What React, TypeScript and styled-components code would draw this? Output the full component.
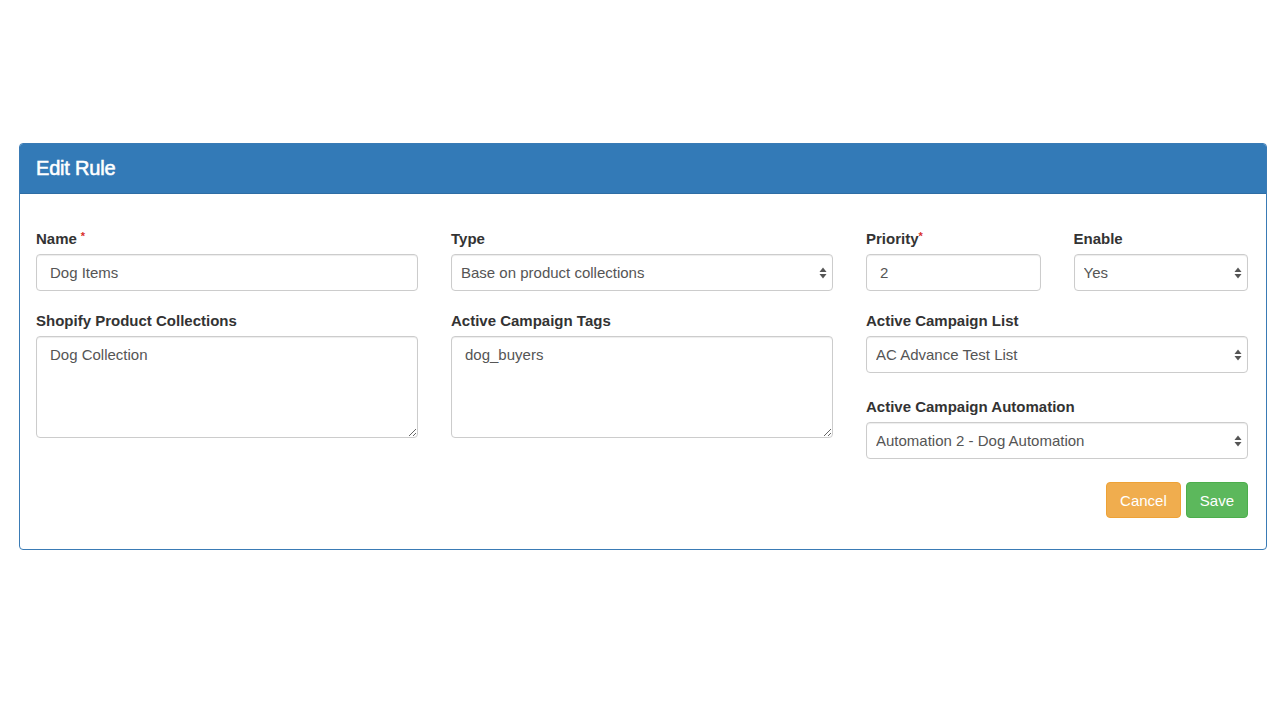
import React, { useState } from 'react';
import styled, { createGlobalStyle } from 'styled-components';

const GlobalStyle = createGlobalStyle`
  html, body {
    margin: 0;
    padding: 0;
    background: #fff;
  }
  body {
    font-family: "Liberation Sans", Arial, Helvetica, sans-serif;
    color: #333;
  }
  * { box-sizing: border-box; }
`;

const Page = styled.div`
  width: 1280px;
  height: 720px;
  padding-top: 143px;
  padding-left: 19px;
`;

const Panel = styled.div`
  width: 1248px;
  border: 1px solid #3a7bb5;
  border-radius: 4px;
  background: #fff;
  overflow: hidden;
`;

const PanelHeading = styled.div`
  height: 50px;
  background: #337ab7;
  display: flex;
  align-items: center;
  padding: 0 16px;
  border-bottom: 1px solid #2e6da4;
`;

const PanelTitle = styled.h3`
  margin: 0;
  color: #fff;
  font-size: 20px;
  font-weight: 400;
  -webkit-text-stroke: 0.55px #fff;
  letter-spacing: -0.2px;
`;

const PanelBody = styled.div`
  padding: 35px 18px 31px 16px;
`;

const Grid = styled.div`
  display: grid;
  grid-template-columns: repeat(3, 382px);
  column-gap: 33px;
`;

const Column = styled.div`
  display: flex;
  flex-direction: column;
`;

const Pair = styled.div`
  display: grid;
  grid-template-columns: 1fr 1fr;
  column-gap: 33px;
`;

const Group = styled.div<{ $mb?: number }>`
  display: flex;
  flex-direction: column;
  margin-bottom: ${p => (p.$mb ?? 20)}px;
`;

const Label = styled.label`
  font-size: 15px;
  line-height: 20px;
  font-weight: 700;
  color: #333;
  margin-bottom: 5px;
`;

const Required = styled.span<{ $space?: boolean }>`
  color: #d9302c;
  font-size: 11px;
  vertical-align: top;
  line-height: 14px;
  margin-left: ${p => (p.$space ? '4px' : '0')};
`;

const Input = styled.input`
  height: 37px;
  width: 100%;
  border: 1px solid #ccc;
  border-radius: 4px;
  padding: 0 13px;
  font-family: inherit;
  font-size: 15px;
  color: #555;
  box-shadow: inset 0 1px 1px rgba(0, 0, 0, 0.075);
  outline: none;
`;

const TextArea = styled.textarea`
  height: 102px;
  width: 100%;
  border: 1px solid #ccc;
  border-radius: 4px;
  padding: 8px 13px;
  font-family: inherit;
  font-size: 15px;
  line-height: 20px;
  color: #555;
  box-shadow: inset 0 1px 1px rgba(0, 0, 0, 0.075);
  outline: none;
  resize: vertical;
`;

const SelectWrap = styled.div`
  position: relative;
  width: 100%;
`;

const Select = styled.select`
  appearance: none;
  -webkit-appearance: none;
  height: 37px;
  width: 100%;
  border: 1px solid #ccc;
  border-radius: 4px;
  padding: 0 26px 0 9px;
  font-family: inherit;
  font-size: 15px;
  color: #555;
  background: #fff;
  box-shadow: inset 0 1px 1px rgba(0, 0, 0, 0.075);
  outline: none;
`;

const Arrows = styled.svg`
  position: absolute;
  right: 6px;
  top: 50%;
  transform: translateY(-50%);
  pointer-events: none;
`;

const Actions = styled.div`
  display: flex;
  justify-content: flex-end;
  gap: 5px;
`;

const Button = styled.button<{ $tone: 'warning' | 'success' }>`
  height: 36px;
  padding: 0 13px;
  border: 1px solid ${p => (p.$tone === 'warning' ? '#eea236' : '#4cae4c')};
  border-radius: 4px;
  background: ${p => (p.$tone === 'warning' ? '#f0ad4e' : '#5cb85c')};
  color: #fff;
  font-family: inherit;
  font-size: 15px;
  cursor: pointer;
`;

const SelectField: React.FC<{ value: string; options: string[] }> = ({ value, options }) => {
  const [current, setCurrent] = useState(value);
  return (
    <SelectWrap>
      <Select value={current} onChange={e => setCurrent(e.target.value)}>
        {options.map(o => (
          <option key={o} value={o}>{o}</option>
        ))}
      </Select>
      <Arrows width="8" height="13" viewBox="0 0 8 13">
        <path d="M4 1 L7.5 5.5 H0.5 Z" fill="#555" />
        <path d="M4 12 L7.5 7.5 H0.5 Z" fill="#555" />
      </Arrows>
    </SelectWrap>
  );
};

const App: React.FC = () => {
  return (
    <>
      <GlobalStyle />
      <Page>
        <Panel>
          <PanelHeading>
            <PanelTitle>Edit Rule</PanelTitle>
          </PanelHeading>
          <PanelBody>
            <Grid>
              <Column>
                <Group>
                  <Label>Name<Required $space>*</Required></Label>
                  <Input defaultValue="Dog Items" />
                </Group>
                <Group $mb={0}>
                  <Label>Shopify Product Collections</Label>
                  <TextArea defaultValue="Dog Collection" />
                </Group>
              </Column>
              <Column>
                <Group>
                  <Label>Type</Label>
                  <SelectField
                    value="Base on product collections"
                    options={['Base on product collections', 'Base on products']}
                  />
                </Group>
                <Group $mb={0}>
                  <Label>Active Campaign Tags</Label>
                  <TextArea defaultValue="dog_buyers" />
                </Group>
              </Column>
              <Column>
                <Pair>
                  <Group>
                    <Label>Priority<Required>*</Required></Label>
                    <Input defaultValue="2" />
                  </Group>
                  <Group>
                    <Label>Enable</Label>
                    <SelectField value="Yes" options={['Yes', 'No']} />
                  </Group>
                </Pair>
                <Group $mb={24}>
                  <Label>Active Campaign List</Label>
                  <SelectField value="AC Advance Test List" options={['AC Advance Test List']} />
                </Group>
                <Group $mb={23}>
                  <Label>Active Campaign Automation</Label>
                  <SelectField
                    value="Automation 2 - Dog Automation"
                    options={['Automation 1', 'Automation 2 - Dog Automation']}
                  />
                </Group>
                <Actions>
                  <Button $tone="warning">Cancel</Button>
                  <Button $tone="success">Save</Button>
                </Actions>
              </Column>
            </Grid>
          </PanelBody>
        </Panel>
      </Page>
    </>
  );
};

export default App;
